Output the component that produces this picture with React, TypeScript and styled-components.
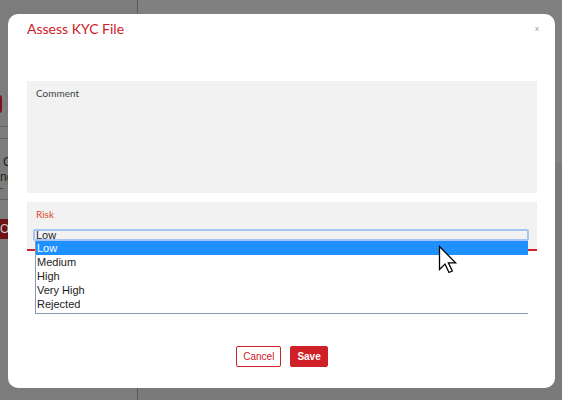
import * as React from "react";
import styled, { createGlobalStyle } from "styled-components";

const ROUGE = "#cf2027";
const GRIS_PANNEAU = "#f2f2f2";

const Globale = createGlobalStyle`
    html, body {
        margin: 0;
        padding: 0;
        overflow: hidden;
        font-family: "Liberation Sans", Arial, sans-serif;
    }
`;

// page underneath the dialog, already dimmed by the backdrop
const Page = styled.div`
    width: 100vw;
    height: 100vh;
    display: flex;
    background: #808080;
`;

const Sidebar = styled.div`
    flex: none;
    width: 137px;
    background: #7c7c7c;
    border-right: 1px solid #5a5a5a;
    display: flex;
    flex-direction: column;
    overflow: hidden;
`;

const SideButton = styled.div`
    margin: 95px 0 0 -40px;
    width: 42px;
    height: 18px;
    border-radius: 3px;
    background: #7a1419;
`;

const SideRule = styled.div<{ $top: number }>`
    margin-top: ${p => p.$top}px;
    height: 1px;
    background: #626262;
`;

const SideText = styled.div<{ $indent: number }>`
    margin-left: ${p => p.$indent}px;
    font-size: 12px;
    line-height: 15px;
    color: #1c1c1c;
    white-space: nowrap;
`;

const SideDash = styled.div`
    margin-top: 3px;
    width: 3px;
    height: 1px;
    background: #444;
`;

const SideTag = styled.div`
    margin-top: 19px;
    height: 20px;
    width: 60px;
    background: #6e1215;
    color: #c9c9c9;
    font-size: 12px;
    line-height: 20px;
`;

const Main = styled.div`
    flex: auto;
    display: flex;
    flex-direction: column;
    background: #7a7a7a;
`;

const MainHeader = styled.div`
    height: 162px;
    background: #808080;
`;

const Modal = styled.div`
    position: fixed;
    left: 8px;
    top: 14px;
    width: 547px;
    height: 374px;
    box-sizing: border-box;
    padding: 6px 18px 21px 19px;
    background: #fff;
    border-radius: 10px;
    display: flex;
    flex-direction: column;
`;

const ModalHeader = styled.div`
    display: flex;
    justify-content: space-between;
    align-items: flex-start;
    height: 17px;
`;

const Title = styled.div`
    font-family: Lato, "Open Sans", sans-serif;
    font-size: 14px;
    line-height: 17px;
    color: ${ROUGE};
`;

const Close = styled.div`
    margin: 3px -2px 0 0;
    font-family: Lato, sans-serif;
    font-size: 8px;
    line-height: 10px;
    color: #a0a0a0;
`;

const Panel = styled.div<{ $height: number; $top: number; $accent?: boolean }>`
    position: relative;
    margin-top: ${p => p.$top}px;
    height: ${p => p.$height}px;
    background: ${GRIS_PANNEAU};
    border-bottom: ${p => (p.$accent ? `2px solid ${ROUGE}` : "none")};
    box-sizing: content-box;
    padding: 6px 8px 0 7px;
    display: flex;
    flex-direction: column;
`;

const FieldLabel = styled.div<{ $tone: string }>`
    margin-left: 2px;
    font-family: Lato, sans-serif;
    font-size: 10px;
    line-height: 12px;
    color: ${p => p.$tone};
`;

const SelectBox = styled.div`
    margin: 9px 0 0 -1px;
    height: 12px;
    box-sizing: border-box;
    border: 2px solid #a6c4f5;
    border-radius: 2px;
    padding-left: 1px;
    font-size: 11px;
    line-height: 8px;
    color: #222;
`;

// open dropdown of the select, drawn over the panel
const ListBox = styled.div`
    position: absolute;
    left: 8px;
    top: 39px;
    width: 492px;
    height: 72px;
    background: #fff;
    border-left: 1px solid #7f9db9;
    border-bottom: 1px solid #7f9db9;
    z-index: 2;
`;

const Option = styled.div<{ $active?: boolean }>`
    height: 14px;
    padding-left: 1px;
    font-size: 11px;
    line-height: 14px;
    color: ${p => (p.$active ? "#fff" : "#222")};
    background: ${p => (p.$active ? "#1e90ff" : "transparent")};
`;

const Footer = styled.div`
    margin-top: 95px;
    display: flex;
    justify-content: center;
    gap: 9px;
`;

const Button = styled.button<{ $primary?: boolean }>`
    height: 21px;
    padding: 0 6px;
    border: 1px solid ${ROUGE};
    border-radius: 2px;
    background: ${p => (p.$primary ? ROUGE : "#fff")};
    color: ${p => (p.$primary ? "#fff" : ROUGE)};
    font-family: "Liberation Sans", Arial, sans-serif;
    font-size: 10px;
    font-weight: ${p => (p.$primary ? "bold" : "normal")};
    cursor: pointer;
`;

const Cursor = styled.svg`
    position: fixed;
    left: 438px;
    top: 245px;
    z-index: 5;
`;

const risques = ["Low", "Medium", "High", "Very High", "Rejected"];

export default function App() {
    return (
        <>
            <Globale />
            <Page>
                <Sidebar>
                    <SideButton />
                    <SideRule $top={13} />
                    <SideRule $top={11} />
                    <SideText $indent={3} style={{ marginTop: 16 }}>Co</SideText>
                    <SideText $indent={0}>ng</SideText>
                    <SideDash />
                    <SideRule $top={10} />
                    <SideTag>Or</SideTag>
                </Sidebar>
                <Main>
                    <MainHeader />
                </Main>
            </Page>
            <Modal>
                <ModalHeader>
                    <Title>Assess KYC File</Title>
                    <Close>x</Close>
                </ModalHeader>
                <Panel $top={44} $height={106}>
                    <FieldLabel $tone="#444">Comment</FieldLabel>
                </Panel>
                <Panel $top={9} $height={41} $accent>
                    <FieldLabel $tone="#dc452f">Risk</FieldLabel>
                    <SelectBox>Low</SelectBox>
                    <ListBox>
                        {risques.map((r, i) => (
                            <Option key={r} $active={i === 0}>{r}</Option>
                        ))}
                    </ListBox>
                </Panel>
                <Footer>
                    <Button>Cancel</Button>
                    <Button $primary>Save</Button>
                </Footer>
            </Modal>
            <Cursor width="20" height="30" viewBox="0 0 20 30">
                <path
                    d="M1.5 1.5 L1.5 24.5 L7 19 L11 27.5 L14.3 26 L10.4 17.8 L17.6 17.8 Z"
                    fill="#fff"
                    stroke="#000"
                    strokeWidth="1.3"
                    strokeLinejoin="miter"
                />
            </Cursor>
        </>
    );
}
